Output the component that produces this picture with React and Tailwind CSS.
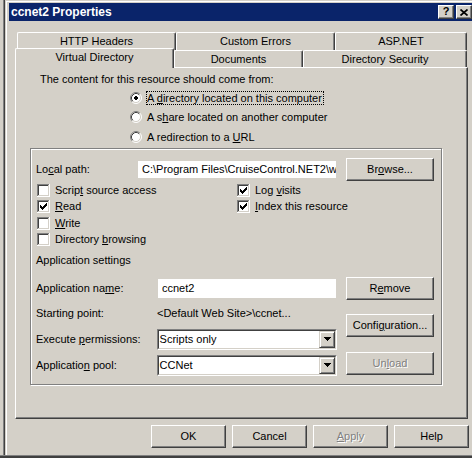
import React from "react";

const raised =
  "border border-t-white border-l-white border-r-[#404040] border-b-[#404040] shadow-[inset_-1px_-1px_0_#808080]";

function U({ children }) {
  return <span className="underline decoration-1 underline-offset-[1px]">{children}</span>;
}

function Button({ children, className = "", disabled = false }) {
  return (
    <div
      className={`flex items-center justify-center bg-[#d4d0c8] ${raised} ${
        disabled ? "text-[#808080] [text-shadow:1px_1px_0_#ffffff]" : "text-black"
      } ${className}`}
    >
      <span className="leading-[13px] whitespace-nowrap">{children}</span>
    </div>
  );
}

const CHECK_COLS = [2, 3, 4, 3, 2, 1, 0];

function Checkbox({ checked }) {
  return (
    <svg width="13" height="13" viewBox="0 0 13 13" shapeRendering="crispEdges" className="shrink-0 block">
      <rect width="13" height="13" fill="#ffffff" />
      <rect x="0" y="0" width="12" height="1" fill="#808080" />
      <rect x="0" y="0" width="1" height="12" fill="#808080" />
      <rect x="1" y="1" width="10" height="1" fill="#404040" />
      <rect x="1" y="1" width="1" height="10" fill="#404040" />
      <rect x="1" y="11" width="11" height="1" fill="#d4d0c8" />
      <rect x="11" y="1" width="1" height="11" fill="#d4d0c8" />
      {checked &&
        CHECK_COLS.map((s, i) => <rect key={i} x={3 + i} y={3 + s} width="1" height="3" fill="#000000" />)}
    </svg>
  );
}

function Radio({ checked }) {
  return (
    <svg width="12" height="12" viewBox="0 0 12 12" className="shrink-0 block">
      <circle cx="6" cy="6" r="5" fill="#ffffff" />
      <path d="M2.11 9.89 A5.5 5.5 0 0 1 9.89 2.11" stroke="#808080" fill="none" />
      <path d="M9.89 2.11 A5.5 5.5 0 0 1 2.11 9.89" stroke="#ffffff" fill="none" />
      <path d="M2.82 9.18 A4.5 4.5 0 0 1 9.18 2.82" stroke="#404040" fill="none" />
      <path d="M9.18 2.82 A4.5 4.5 0 0 1 2.82 9.18" stroke="#d4d0c8" fill="none" />
      {checked && (
        <g shapeRendering="crispEdges" fill="#000000">
          <rect x="5" y="4" width="2" height="4" />
          <rect x="4" y="5" width="4" height="2" />
        </g>
      )}
    </svg>
  );
}

function RadioRow({ h, checked, focus, children }) {
  return (
    <div className={`${h} flex items-center gap-[4px]`}>
      <Radio checked={checked} />
      <span
        className={`border leading-[12px] pr-px whitespace-nowrap ${
          focus ? "border-dotted border-black" : "border-transparent"
        }`}
      >
        {children}
      </span>
    </div>
  );
}

function CheckRow({ h, checked, children }) {
  return (
    <div className={`${h} flex items-center gap-[5px]`}>
      <Checkbox checked={checked} />
      <span className="whitespace-nowrap">{children}</span>
    </div>
  );
}

function Combo({ value }) {
  return (
    <div className="w-[181px] h-[21px] flex border border-t-[#808080] border-l-[#808080] border-r-white border-b-white">
      <div className="flex-1 flex border border-t-[#404040] border-l-[#404040] border-r-[#d4d0c8] border-b-[#d4d0c8] bg-white">
        <div className="flex-1 flex items-center pl-[1px] whitespace-nowrap">{value}</div>
        <div className="w-[16px] h-full flex items-center justify-center bg-[#d4d0c8] border border-t-[#d4d0c8] border-l-[#d4d0c8] border-r-[#404040] border-b-[#404040] shadow-[inset_1px_1px_0_#ffffff,inset_-1px_-1px_0_#808080]">
          <svg width="7" height="4" viewBox="0 0 7 4" shapeRendering="crispEdges" className="block">
            <rect x="0" y="0" width="7" height="1" fill="#000" />
            <rect x="1" y="1" width="5" height="1" fill="#000" />
            <rect x="2" y="2" width="3" height="1" fill="#000" />
            <rect x="3" y="3" width="1" height="1" fill="#000" />
          </svg>
        </div>
      </div>
    </div>
  );
}

function BackTab({ w, children }) {
  return (
    <div
      className={`${w} h-[18px] flex items-center justify-center border-t border-l border-r border-t-white border-l-white border-r-[#404040] shadow-[inset_-1px_0_0_#808080] rounded-t-[2px] whitespace-nowrap`}
    >
      {children}
    </div>
  );
}

function FrontTab({ w, selected, children }) {
  if (selected) {
    return (
      <div
        className={`${w} h-[20px] mt-[-2px] relative z-10 bg-[#d4d0c8] flex items-center justify-center pb-[2px] border-t border-l border-r border-t-white border-l-white border-r-[#404040] shadow-[inset_-1px_0_0_#808080] rounded-t-[2px] whitespace-nowrap`}
      >
        {children}
      </div>
    );
  }
  return (
    <div
      className={`${w} h-[17px] flex items-center justify-center border-t border-l border-r border-t-white border-l-white border-r-[#404040] shadow-[inset_-1px_0_0_#808080] rounded-t-[2px] whitespace-nowrap`}
    >
      {children}
    </div>
  );
}

export default function App() {
  return (
    <div className="w-[472px] h-[458px] bg-[#d4d0c8] overflow-hidden flex flex-col font-['Liberation_Sans',Arial,sans-serif] text-[11px] leading-[13px] text-black select-none">
      <div className="flex-1 min-h-0 flex">
        <div className="w-[3px]" />
        <div className="w-px bg-[#808080]" />
        <div className="w-px bg-[#404040]" />
        <div className="flex-1 min-w-0 pl-px pt-px flex flex-col">
          <div className="flex-1 min-h-0 border-l border-t border-white pl-[2px] pt-px flex flex-col">
            {/* Title bar */}
            <div className="h-[18px] bg-[#0a246a] flex items-center justify-between pl-[2px]">
              <span className="text-white font-bold text-[12px] leading-[14px] whitespace-nowrap">
                ccnet2 Properties
              </span>
              <div className="flex items-center gap-[2px]">
                <div className={`w-[16px] h-[14px] bg-[#d4d0c8] flex items-center justify-center ${raised}`}>
                  <span className="font-bold text-[11px] leading-[11px] text-black pb-px">?</span>
                </div>
                <div className={`w-[16px] h-[14px] bg-[#d4d0c8] flex items-center justify-center ${raised}`}>
                  <svg width="8" height="7" viewBox="0 0 8 7" className="block">
                    <path d="M0.5 0.5 L7.5 6.5 M7.5 0.5 L0.5 6.5" stroke="#000" strokeWidth="1.7" />
                  </svg>
                </div>
              </div>
            </div>

            {/* Body */}
            <div className="pl-[6px] flex flex-col">
              <div className="mt-[11px] w-[453px]">
                {/* back tab row */}
                <div className="flex pl-[2px] h-[18px]">
                  <BackTab w="w-[159px]">HTTP Headers</BackTab>
                  <BackTab w="w-[159px]">Custom Errors</BackTab>
                  <BackTab w="w-[132px]">ASP.NET</BackTab>
                </div>
                {/* front tab row */}
                <div className="flex h-[17px] items-start">
                  <FrontTab w="w-[159px]" selected>
                    Virtual Directory
                  </FrontTab>
                  <FrontTab w="w-[129px]">Documents</FrontTab>
                  <FrontTab w="w-[164px]">Directory Security</FrontTab>
                </div>
                {/* panel */}
                <div className="h-[352px] w-[453px] border border-t-white border-l-white border-r-[#404040] border-b-[#404040] shadow-[inset_-1px_-1px_0_#808080] flex flex-col">
                  <div className="pl-[24px] mt-[5px] h-[13px] whitespace-nowrap">
                    The content for this resource should come from:
                  </div>
                  <div className="pl-[114px] mt-[2px] flex flex-col">
                    <RadioRow h="h-[19px]" checked focus>
                      A <U>d</U>irectory located on this computer
                    </RadioRow>
                    <RadioRow h="h-[20px]">
                      A s<U>h</U>are located on another computer
                    </RadioRow>
                    <RadioRow h="h-[19px]">
                      A redirection to a <U>U</U>RL
                    </RadioRow>
                  </div>

                  {/* group box */}
                  <div className="ml-[14px] mt-[2px] w-[412px] h-[237px] border border-[#808080] shadow-[inset_1px_1px_0_#ffffff,1px_1px_0_#ffffff] flex flex-col">
                    <div className="mt-[9px] pl-[5px] h-[23px] flex items-center">
                      <div className="w-[102px] whitespace-nowrap">
                        Lo<U>c</U>al path:
                      </div>
                      <div className="w-[198px] h-[17px] bg-white flex items-center pl-[4px] overflow-hidden whitespace-nowrap">
                        <span className="whitespace-nowrap">C:\Program Files\CruiseControl.NET2\w</span>
                      </div>
                      <Button className="ml-[10px] w-[88px] h-[23px]">
                        Br<U>o</U>wse...
                      </Button>
                    </div>

                    <div className="mt-[1px] pl-[6px] flex">
                      <div className="w-[200px] flex flex-col">
                        <CheckRow h="h-[16px]">
                          Scrip<U>t</U> source access
                        </CheckRow>
                        <CheckRow h="h-[17px]" checked>
                          <U>R</U>ead
                        </CheckRow>
                        <CheckRow h="h-[16px]">
                          <U>W</U>rite
                        </CheckRow>
                        <CheckRow h="h-[17px]">
                          Directory <U>b</U>rowsing
                        </CheckRow>
                      </div>
                      <div className="flex flex-col">
                        <CheckRow h="h-[16px]" checked>
                          Log <U>v</U>isits
                        </CheckRow>
                        <CheckRow h="h-[17px]" checked>
                          <U>I</U>ndex this resource
                        </CheckRow>
                      </div>
                    </div>

                    <div className="mt-[6px] pl-[5px] h-[13px] whitespace-nowrap">Application settings</div>

                    <div className="mt-[10px] pl-[5px] flex">
                      <div className="w-[301px] flex flex-col">
                        <div className="h-[23px] flex items-center">
                          <div className="w-[121px] whitespace-nowrap">
                            Application na<U>m</U>e:
                          </div>
                          <div className="ml-px w-[178px] h-[19px] bg-white flex items-center pl-[4px] whitespace-nowrap">
                            ccnet2
                          </div>
                        </div>
                        <div className="h-[26px] flex items-center">
                          <div className="w-[121px] whitespace-nowrap">Starting point:</div>
                          <div className="whitespace-nowrap">&lt;Default Web Site&gt;\ccnet...</div>
                        </div>
                        <div className="h-[26px] flex items-center">
                          <div className="w-[121px] whitespace-nowrap">
                            Execute <U>p</U>ermissions:
                          </div>
                          <Combo value="Scripts only" />
                        </div>
                        <div className="h-[26px] flex items-center">
                          <div className="w-[121px] whitespace-nowrap">
                            Applicatio<U>n</U> pool:
                          </div>
                          <Combo value="CCNet" />
                        </div>
                      </div>
                      <div className="ml-[9px] flex flex-col">
                        <Button className="w-[88px] h-[23px]">
                          R<U>e</U>move
                        </Button>
                        <Button className="mt-[14px] w-[88px] h-[23px]">
                          Confi<U>g</U>uration...
                        </Button>
                        <Button className="mt-[15px] w-[88px] h-[23px]" disabled>
                          Un<U>l</U>oad
                        </Button>
                      </div>
                    </div>
                  </div>
                </div>
              </div>

              {/* bottom buttons */}
              <div className="mt-[6px] w-[454px] flex justify-end gap-[6px]">
                <Button className="w-[75px] h-[23px]">OK</Button>
                <Button className="w-[75px] h-[23px]">Cancel</Button>
                <Button className="w-[75px] h-[23px]" disabled>
                  <U>A</U>pply
                </Button>
                <Button className="w-[75px] h-[23px]">Help</Button>
              </div>
            </div>
          </div>
        </div>
      </div>
      <div className="h-px bg-[#808080]" />
      <div className="h-[2px] bg-[#404040]" />
    </div>
  );
}
